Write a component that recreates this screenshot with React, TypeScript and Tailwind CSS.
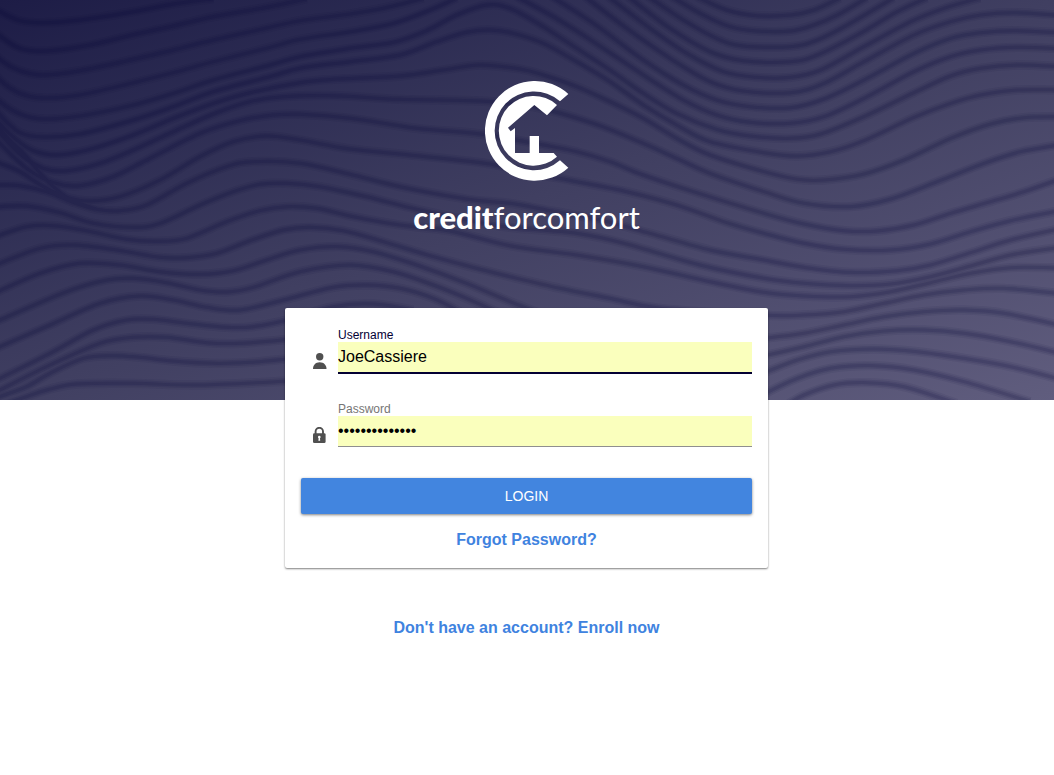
import React from "react";

type Point = [number, number];

const contours: Point[][] = [
  [[-40, 5], [0, 35], [60, 62], [130, 68], [240, 60], [400, 35], [520, 12], [640, -4]],
  [[-40, 70], [0, 108], [60, 145], [140, 153], [270, 135], [400, 104], [520, 78], [640, 50], [810, 20], [920, -4]],
  [[-40, 130], [0, 178], [60, 212], [130, 225], [240, 212], [400, 178], [520, 150], [640, 120], [810, 82], [900, 62], [1050, 42], [1170, 20], [1270, -6]],
  [[-40, 190], [0, 240], [60, 280], [130, 294], [240, 285], [400, 248], [520, 218], [640, 185], [810, 142], [900, 118], [1050, 95], [1180, 70], [1290, 30], [1370, -6]],
  [[-40, 260], [0, 305], [60, 342], [130, 357], [240, 348], [400, 315], [520, 280], [640, 240], [810, 195], [900, 170], [1050, 145], [1180, 127], [1280, 92], [1370, 45], [1460, 15], [1530, 25], [1630, 80], [1730, 145], [1830, 210], [1930, 280], [2030, 340], [2150, 388], [2250, 408], [2372, 415], [2462, 402], [2592, 350], [2742, 278], [2852, 228], [2942, 205], [3052, 195], [3180, 200]],
  [[-40, 290], [0, 345], [60, 398], [130, 411], [240, 402], [400, 360], [520, 320], [640, 275], [810, 230], [900, 205], [1050, 185], [1200, 165], [1310, 125], [1400, 97], [1470, 90], [1540, 100], [1630, 130], [1730, 185], [1830, 245], [1930, 315], [2030, 375], [2130, 425], [2292, 458], [2392, 468], [2492, 455], [2592, 422], [2742, 352], [2852, 310], [2942, 285], [3052, 270], [3180, 270]],
  [[-40, 320], [0, 372], [50, 420], [100, 452], [170, 465], [270, 448], [400, 405], [520, 355], [640, 310], [750, 278], [900, 248], [1000, 238], [1200, 228], [1330, 210], [1440, 195], [1560, 207], [1630, 225], [1730, 260], [1830, 305], [1930, 355], [2030, 415], [2130, 465], [2292, 515], [2392, 538], [2472, 540], [2592, 522], [2712, 480], [2852, 415], [2972, 372], [3072, 353], [3180, 350]],
  [[-40, 350], [0, 400], [60, 462], [130, 505], [200, 512], [300, 490], [400, 450], [520, 395], [640, 342], [750, 305], [850, 290], [1000, 287], [1200, 298], [1440, 303], [1600, 320], [1780, 370], [1930, 430], [2030, 475], [2130, 520], [2292, 575], [2412, 610], [2552, 620], [2672, 597], [2812, 545], [2952, 490], [3062, 455], [3180, 434]],
  [[-40, 390], [0, 430], [80, 505], [160, 548], [240, 557], [340, 530], [450, 475], [600, 400], [720, 362], [820, 345], [900, 343], [1050, 355], [1250, 385], [1440, 402], [1630, 435], [1730, 455], [1830, 485], [1930, 525], [2080, 575], [2292, 640], [2412, 672], [2532, 692], [2632, 693], [2742, 675], [2852, 640], [2972, 605], [3072, 575], [3180, 537]],
  [[-40, 475], [0, 490], [60, 515], [130, 560], [200, 592], [270, 603], [360, 590], [480, 540], [600, 470], [700, 425], [800, 408], [900, 420], [1050, 447], [1250, 467], [1470, 492], [1600, 520], [1730, 545], [1880, 575], [2030, 615], [2180, 668], [2292, 700], [2412, 730], [2532, 748], [2672, 750], [2792, 732], [2912, 695], [3032, 662], [3180, 632]],
  [[-40, 330], [20, 410], [70, 460], [130, 530], [200, 592], [290, 628]],
  [[-40, 555], [0, 555], [60, 557], [140, 575], [220, 607], [290, 628], [360, 632], [440, 615], [560, 550], [680, 500], [760, 485], [900, 490], [1050, 523], [1200, 560], [1400, 597], [1530, 610], [1650, 632], [1800, 660], [1950, 700], [2130, 750], [2292, 780], [2412, 802], [2552, 817], [2692, 812], [2792, 795], [2912, 758], [3032, 720], [3180, 686]],
  [[-40, 625], [0, 620], [80, 618], [180, 638], [280, 670], [400, 682], [480, 670], [600, 615], [700, 575], [780, 553], [860, 550], [960, 560], [1100, 590], [1250, 628], [1400, 660], [1530, 682], [1730, 700], [1880, 732], [2100, 795], [2292, 835], [2412, 850], [2552, 857], [2672, 852], [2792, 830], [2912, 798], [3032, 765], [3180, 742]],
  [[-40, 720], [0, 705], [80, 680], [160, 677], [260, 692], [380, 718], [470, 724], [560, 715], [680, 665], [780, 632], [860, 620], [950, 625], [1060, 650], [1200, 675], [1350, 693], [1530, 737], [1730, 765], [1930, 800], [2130, 845], [2292, 877], [2412, 888], [2552, 890], [2672, 875], [2792, 848], [2912, 820], [3032, 803], [3180, 804]],
  [[-40, 810], [0, 790], [120, 745], [220, 735], [350, 750], [480, 772], [560, 773], [650, 760], [750, 722], [850, 690], [930, 682], [1030, 692], [1150, 725], [1300, 770], [1450, 810], [1530, 830], [1680, 865], [1830, 895], [1980, 925], [2292, 946], [2412, 945], [2532, 935], [2652, 910], [2772, 885], [2892, 870], [3012, 865], [3180, 881]],
  [[-40, 890], [0, 872], [120, 820], [240, 790], [360, 795], [480, 815], [600, 823], [700, 812], [800, 780], [900, 750], [1020, 740], [1120, 755], [1250, 795], [1400, 850], [1530, 905], [1620, 940]],
  [[-40, 978], [0, 960], [200, 875], [320, 840], [400, 835], [500, 848], [600, 870], [680, 876], [760, 862], [900, 815], [1050, 795], [1180, 815], [1300, 855], [1400, 895], [1500, 940]],
  [[-40, 1058], [0, 1040], [150, 975], [300, 910], [420, 888], [520, 900], [620, 922], [720, 930], [850, 900], [1000, 862], [1100, 855], [1200, 865], [1300, 895], [1380, 935]],
  [[-40, 1155], [0, 1135], [150, 1060], [280, 990], [380, 960], [460, 958], [560, 970], [680, 982], [760, 980], [870, 958], [1000, 920], [1120, 912], [1240, 930]],
  [[-40, 1190], [0, 1170], [150, 1095], [300, 1030], [400, 1012], [500, 1012], [620, 1028], [720, 1030], [870, 1018]],
  [[-40, 1210], [0, 1190], [80, 1160], [150, 1120], [250, 1075], [340, 1067], [420, 1072], [520, 1083], [640, 1090], [750, 1087], [870, 1076]],
  [[20, 1210], [80, 1190], [140, 1170], [230, 1152], [400, 1150], [600, 1155], [870, 1143]],
  [[2090, -10], [2180, 30], [2270, 47], [2372, 45], [2442, 30], [2520, -6]],
  [[2015, -10], [2110, 45], [2190, 80], [2270, 93], [2372, 93], [2442, 75], [2512, 45], [2600, -6]],
  [[1945, -10], [2050, 60], [2150, 115], [2230, 138], [2372, 140], [2452, 120], [2542, 75], [2680, -6]],
  [[1885, -10], [2010, 85], [2130, 155], [2230, 182], [2372, 185], [2452, 165], [2572, 105], [2692, 35], [2780, -6]],
  [[1825, -10], [1950, 85], [2060, 160], [2170, 215], [2270, 232], [2372, 232], [2462, 210], [2592, 140], [2732, 65], [2832, 25], [2940, -6]],
  [[1755, -10], [1880, 85], [2010, 175], [2130, 245], [2230, 273], [2372, 278], [2472, 250], [2592, 185], [2742, 105], [2852, 65], [2942, 45], [3042, 38], [3180, 46]],
  [[1655, -10], [1780, 70], [1930, 180], [2050, 255], [2150, 300], [2250, 320], [2372, 323], [2472, 297], [2592, 240], [2742, 160], [2852, 115], [2942, 98], [3042, 92], [3180, 98]],
  [[1550, -10], [1660, 50], [1780, 125], [1930, 225], [2050, 300], [2150, 345], [2250, 367], [2372, 370], [2472, 350], [2592, 295], [2742, 215], [2852, 170], [2942, 150], [3052, 142], [3180, 146]],
  [[2180, 1025], [2292, 1015], [2412, 1000], [2532, 975], [2652, 950], [2772, 935], [2892, 930], [3012, 940], [3180, 976]],
  [[2200, 1085], [2292, 1067], [2412, 1040], [2532, 1010], [2652, 993], [2772, 990], [2892, 1000], [3032, 1025], [3180, 1060]],
  [[2200, 1150], [2292, 1118], [2392, 1080], [2492, 1055], [2622, 1047], [2752, 1055], [2892, 1075], [3032, 1100], [3180, 1138]],
  [[2200, 1235], [2292, 1182], [2392, 1135], [2492, 1105], [2622, 1097], [2742, 1110], [2892, 1145], [3090, 1205]],
  [[2360, 1215], [2412, 1185], [2502, 1155], [2602, 1148], [2712, 1160], [2870, 1210]],
];

// Catmull-Rom spline through the points, written as cubic segments.
function smoothPath(points: Point[]): string {
  let d = `M${points[0][0]} ${points[0][1]}`;
  for (let i = 0; i < points.length - 1; i++) {
    const p0 = points[Math.max(i - 1, 0)];
    const p1 = points[i];
    const p2 = points[i + 1];
    const p3 = points[Math.min(i + 2, points.length - 1)];
    const c1x = p1[0] + (p2[0] - p0[0]) / 6;
    const c1y = p1[1] + (p2[1] - p0[1]) / 6;
    const c2x = p2[0] - (p3[0] - p1[0]) / 6;
    const c2y = p2[1] - (p3[1] - p1[1]) / 6;
    d += `C${c1x} ${c1y} ${c2x} ${c2y} ${p2[0]} ${p2[1]}`;
  }
  return d;
}

// All contours share one path so that crossings do not build up darkness.
const contourPath = contours.map(smoothPath).join("");

function Waves() {
  return (
    <svg
      aria-hidden="true"
      viewBox="0 0 3162 1200"
      preserveAspectRatio="xMidYMid slice"
      className="h-full w-full"
      fill="none"
      stroke="#08083a"
    >
      <path d={contourPath} strokeWidth="28" strokeOpacity="0.07" />
      <path d={contourPath} strokeWidth="18" strokeOpacity="0.1" />
      <path d={contourPath} strokeWidth="9" strokeOpacity="0.12" />
    </svg>
  );
}

function Logo() {
  return (
    <div className="flex flex-col items-center text-white">
      <svg aria-hidden="true" viewBox="45 33 252 300" className="h-[100px] w-[84px]" fill="currentColor">
        <path d="M295 72A149.500 149.500 0 1 0 295 293L270 271A118 118 0 1 1 270 94Z" />
        <path d="M261 105A104.500 104.500 0 1 0 261 260L251 249H207V198H179V249H135V174L122 184L114 173L193 105L231 136Z" />
      </svg>
      <h1 className="mt-4 font-[Lato,sans-serif] text-[31px] leading-10 font-normal">
        <span className="font-black">credit</span>forcomfort
      </h1>
    </div>
  );
}

function PersonIcon() {
  return (
    <svg aria-hidden="true" viewBox="0 0 14 16" className="mt-[25px] h-4 w-3.5 shrink-0" fill="#505050">
      <circle cx="6.700" cy="3.700" r="3.700" />
      <path d="M0 16C0 12 2.500 9.200 6.700 9.200S13.500 12 13.500 16Z" />
    </svg>
  );
}

function LockIcon() {
  return (
    <svg aria-hidden="true" viewBox="0 0 14 16" className="mt-[25px] h-4 w-3.5 shrink-0">
      <path d="M2.600 7.500V4.500a3.700 3.700 0 0 1 7.400 0V7.500" fill="none" stroke="#505050" strokeWidth="1.900" />
      <rect y="6.300" width="12.600" height="9.700" rx="1.300" fill="#505050" />
      <circle cx="6.300" cy="10" r="1.300" fill="#fff" />
      <path d="M5.700 10h1.200l.3 3.800H5.400Z" fill="#fff" />
    </svg>
  );
}

export default function App() {
  return (
    <div className="relative min-h-screen bg-white pt-[81px] pr-[17px] pb-16 pl-4 font-['Liberation_Sans',Arial,sans-serif]">
      <div className="absolute inset-x-0 top-0 h-[400px] overflow-hidden bg-linear-to-br from-[#1d1c46] via-[#403f61] to-[#605d7e]">
        <Waves />
      </div>

      <main className="relative mx-auto flex max-w-[483px] flex-col">
        <Logo />

        <form
          className="mt-[71px] rounded-xs bg-white px-4 pt-5 pb-4 shadow-[0_1px_2px_rgba(0,0,0,0.5)]"
          onSubmit={(event) => event.preventDefault()}
        >
          <div className="flex gap-[11px] pl-3">
            <PersonIcon />
            <div className="flex min-w-0 grow flex-col">
              <label htmlFor="username" className="text-xs leading-[14px] text-[#030033]">
                Username
              </label>
              <input
                id="username"
                type="text"
                defaultValue="JoeCassiere"
                className="h-8 w-full border-b-2 border-[#030033] bg-[#faffbd] text-base text-black outline-none"
              />
            </div>
          </div>

          <div className="mt-7 flex gap-[11px] pl-3">
            <LockIcon />
            <div className="flex min-w-0 grow flex-col">
              <label htmlFor="password" className="text-xs leading-[14px] text-[#757575]">
                Password
              </label>
              <input
                id="password"
                type="password"
                defaultValue="comfortcredit1"
                className="h-[31px] w-full border-b border-[#8f8f8f] bg-[#faffbd] text-base text-black outline-none"
              />
            </div>
          </div>

          <button
            type="submit"
            className="mt-[31px] h-9 w-full rounded-xs bg-[#4285df] text-sm text-white shadow-[0_1px_3px_rgba(0,0,0,0.5)]"
          >
            LOGIN
          </button>

          <div className="mt-3.5 text-center">
            <a href="#forgot-password" className="block leading-6 font-bold text-[#3f83df]">
              Forgot Password?
            </a>
          </div>
        </form>

        <a href="#enroll" className="mt-12 self-center leading-6 font-bold text-[#3f83df]">
          Don't have an account? Enroll now
        </a>
      </main>
    </div>
  );
}
